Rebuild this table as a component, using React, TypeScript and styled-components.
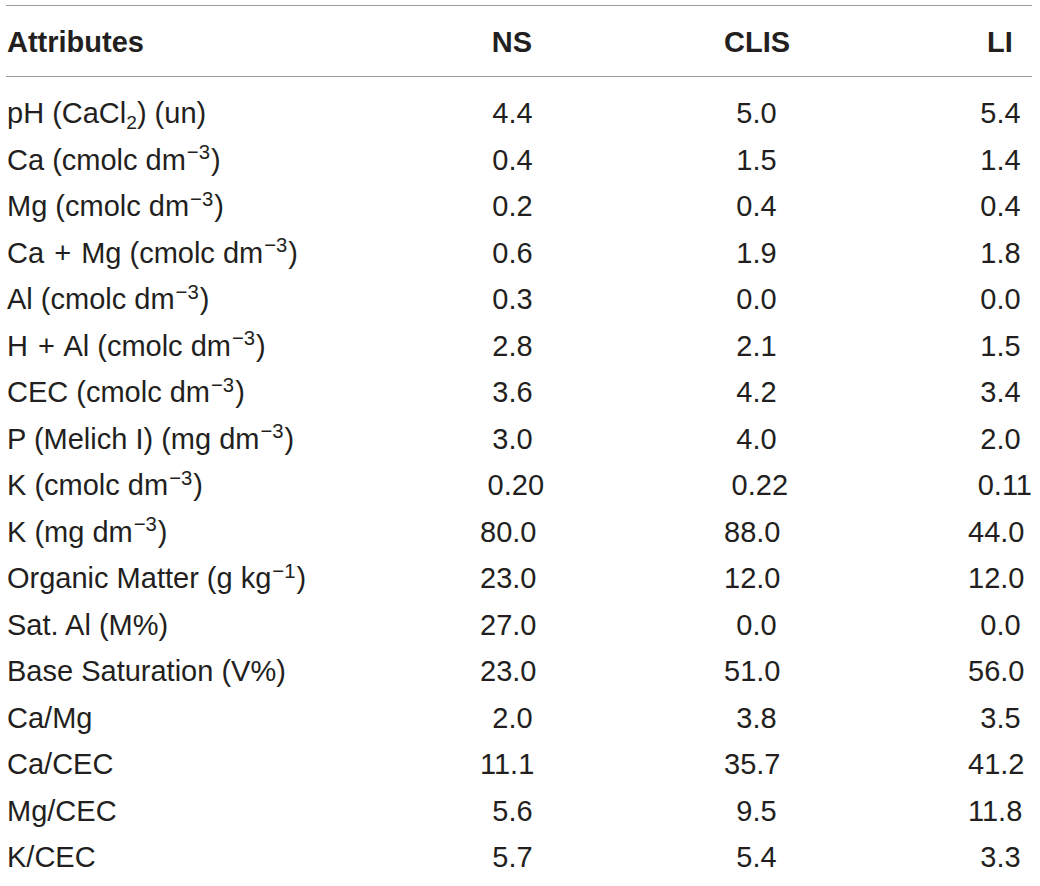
import React from "react";
import styled, { createGlobalStyle } from "styled-components";

const GlobalStyle = createGlobalStyle`
  html, body {
    margin: 0;
    padding: 0;
    background: #ffffff;
  }
  body {
    font-family: "Liberation Sans", Arial, Helvetica, sans-serif;
    color: #231f20;
  }
`;

const Table = styled.div`
  margin: 5px 8px 0 6px;
  width: 1026px;
  font-size: 29px;
  line-height: 46.5px;
`;

const Row = styled.div<{ $head?: boolean }>`
  display: grid;
  grid-template-columns: minmax(0, 1fr) repeat(3, 64px);
  column-gap: 180px;
  font-weight: ${(p) => (p.$head ? 700 : 400)};
`;

const Head = styled.div`
  border-top: 1px solid #9b9b9b;
  border-bottom: 1px solid #9b9b9b;
  padding: 12.7px 0 10.8px;
`;

const Body = styled.div`
  padding-top: 13.2px;
`;

const Label = styled.div`
  padding-left: 1px;
  white-space: nowrap;
`;

const HeadCell = styled.div`
  text-align: center;
  white-space: nowrap;
`;

const NumCell = styled.div`
  display: flex;
  justify-content: center;
  white-space: nowrap;
`;

const IntPart = styled.span`
  display: inline-block;
  width: 1.112em;
  text-align: right;
`;

const FracPart = styled.span`
  display: inline-block;
  width: 1.39em;
  text-align: left;
`;

const Sup = styled.span`
  font-size: 0.7em;
  position: relative;
  top: -0.52em;
  line-height: 0;
  margin-left: 1px;
  margin-right: 1px;
`;

const Sub = styled.span`
  font-size: 0.66em;
  position: relative;
  top: 0.3em;
  line-height: 0;
`;

const Op = styled.span`
  margin: 0 2px;
`;

const Num: React.FC<{ v: string }> = ({ v }) => {
  const [i, f] = v.split(".");
  return (
    <NumCell>
      <IntPart>{i}</IntPart>
      <FracPart>.{f}</FracPart>
    </NumCell>
  );
};

const unit = (u: React.ReactNode, e = "−3") => (
  <>
    {u}
    <Sup>{e}</Sup>)
  </>
);

type R = { label: React.ReactNode; ns: string; clis: string; li: string };

const rows: R[] = [
  {
    label: (
      <>
        pH (CaCl<Sub>2</Sub>) (un)
      </>
    ),
    ns: "4.4",
    clis: "5.0",
    li: "5.4",
  },
  { label: unit("Ca (cmolc dm"), ns: "0.4", clis: "1.5", li: "1.4" },
  { label: unit("Mg (cmolc dm"), ns: "0.2", clis: "0.4", li: "0.4" },
  {
    label: unit(
      <>
        Ca <Op>+</Op> Mg (cmolc dm
      </>
    ),
    ns: "0.6",
    clis: "1.9",
    li: "1.8",
  },
  { label: unit("Al (cmolc dm"), ns: "0.3", clis: "0.0", li: "0.0" },
  {
    label: unit(
      <>
        H <Op>+</Op> Al (cmolc dm
      </>
    ),
    ns: "2.8",
    clis: "2.1",
    li: "1.5",
  },
  { label: unit("CEC (cmolc dm"), ns: "3.6", clis: "4.2", li: "3.4" },
  { label: unit("P (Melich I) (mg dm"), ns: "3.0", clis: "4.0", li: "2.0" },
  { label: unit("K (cmolc dm"), ns: "0.20", clis: "0.22", li: "0.11" },
  { label: unit("K (mg dm"), ns: "80.0", clis: "88.0", li: "44.0" },
  { label: unit("Organic Matter (g kg", "−1"), ns: "23.0", clis: "12.0", li: "12.0" },
  { label: "Sat. Al (M%)", ns: "27.0", clis: "0.0", li: "0.0" },
  { label: "Base Saturation (V%)", ns: "23.0", clis: "51.0", li: "56.0" },
  { label: "Ca/Mg", ns: "2.0", clis: "3.8", li: "3.5" },
  { label: "Ca/CEC", ns: "11.1", clis: "35.7", li: "41.2" },
  { label: "Mg/CEC", ns: "5.6", clis: "9.5", li: "11.8" },
  { label: "K/CEC", ns: "5.7", clis: "5.4", li: "3.3" },
];

export default function App() {
  return (
    <>
      <GlobalStyle />
      <Table>
        <Head>
          <Row $head>
            <Label>Attributes</Label>
            <HeadCell>NS</HeadCell>
            <HeadCell>CLIS</HeadCell>
            <HeadCell>LI</HeadCell>
          </Row>
        </Head>
        <Body>
          {rows.map((r, idx) => (
            <Row key={idx}>
              <Label>{r.label}</Label>
              <Num v={r.ns} />
              <Num v={r.clis} />
              <Num v={r.li} />
            </Row>
          ))}
        </Body>
      </Table>
    </>
  );
}
